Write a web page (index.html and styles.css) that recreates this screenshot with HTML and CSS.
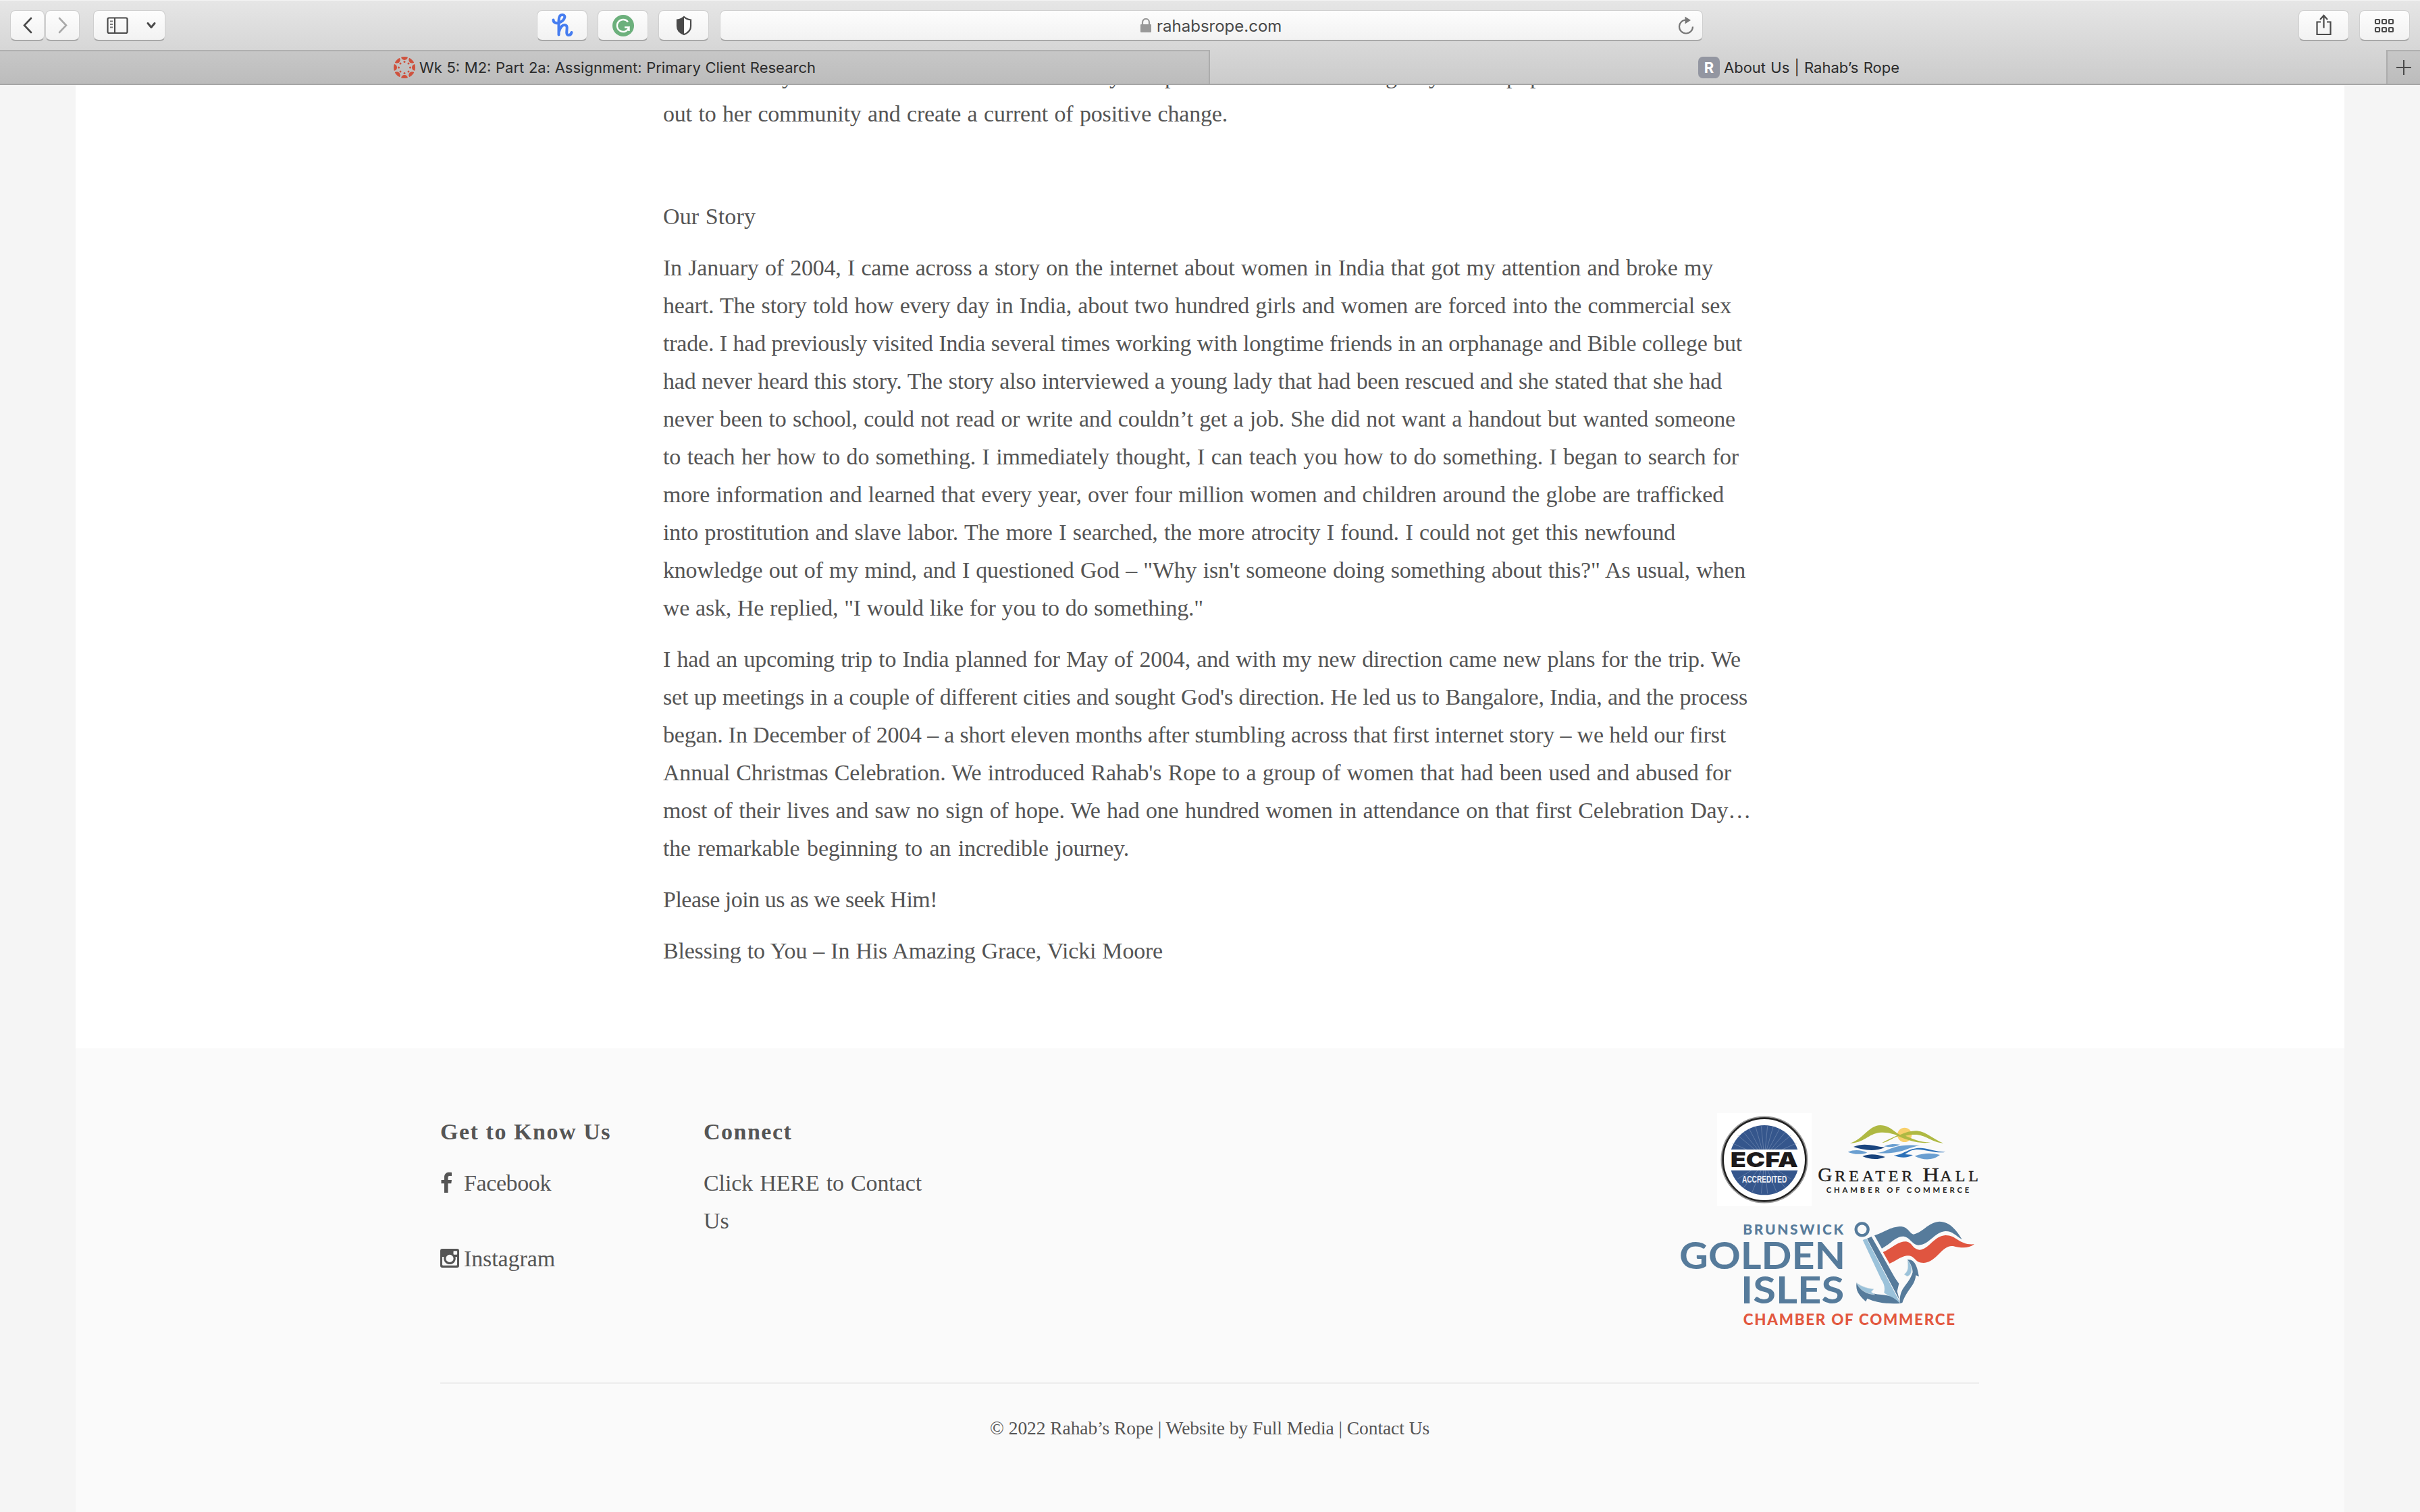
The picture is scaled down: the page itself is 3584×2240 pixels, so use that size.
FILE: index.html
```html
<!DOCTYPE html>
<html lang="en">
<head>
<meta charset="utf-8">
<title>About Us | Rahab’s Rope</title>
<link rel="stylesheet" href="styles.css">
</head>
<body>
<header class="chrome">
  <div class="toolbar">
    <div class="group nav">
      <button class="btn nav-btn"><svg width="50" height="45" viewBox="0 0 50 45"><path d="M30 12 20 22.5 30 33" fill="none" stroke="#4a4a4a" stroke-width="2.6" stroke-linecap="round"/></svg></button>
      <button class="btn nav-btn"><svg width="50" height="45" viewBox="0 0 50 45"><path d="M20 12 30 22.5 20 33" fill="none" stroke="#a9a9a9" stroke-width="2.6" stroke-linecap="round"/></svg></button>
    </div>
    <div class="btn sidebar-btn">
      <svg width="69" height="45" viewBox="0 0 69 45"><rect x="20.5" y="11.5" width="29" height="22.5" rx="2" fill="none" stroke="#4a4a4a" stroke-width="2.2"/><path d="M31 11v23" stroke="#4a4a4a" stroke-width="2"/><path d="M24 16.5h4M24 21h4M24 25.500h4" stroke="#777" stroke-width="2"/></svg>
      <span class="divider"></span>
      <svg width="36" height="45" viewBox="0 0 36 45"><path d="M11 19.500 16 25.500 21 19.500" fill="none" stroke="#4a4a4a" stroke-width="3" stroke-linecap="round" stroke-linejoin="round"/></svg>
    </div>
    <div class="group extensions">
      <button class="btn ext"><svg width="74" height="45" viewBox="0 0 74 45"><path d="M23.500 14.500c0 5 6 6 11 3 6-3 8-10 3-10.500-4.500-.5-6 3.500-6 8.500v21M31.500 33c2-7 5-11 8.500-11 4 0 4 3.500 3.500 7-.5 5-.5 8 2.500 8 2.500 0 4-1.500 4.500-4" fill="none" stroke="#467df0" stroke-width="4" stroke-linecap="round" stroke-linejoin="round"/></svg></button>
      <button class="btn ext"><svg width="74" height="45" viewBox="0 0 74 45"><circle cx="37" cy="23" r="16" fill="#6cb07c"/><path d="M44 17.500A9 9 0 1 0 45.500 25.500H39M45.500 25v6" fill="none" stroke="#fff" stroke-width="2.400"/></svg></button>
      <button class="btn ext"><svg width="74" height="45" viewBox="0 0 74 45"><path d="M37 10c3 3 6 4 10 4.500V24c0 6-5 10-10 12-5-2-10-6-10-12v-9.500C31 14 34 13 37 10z" fill="#fff" stroke="#4a4a4a" stroke-width="2.200"/><path d="M37 10v26c-5-2-10-6-10-12v-9.500C31 14 34 13 37 10z" fill="#4a4a4a"/></svg></button>
    </div>
    <div class="btn address">
      <svg class="lock" width="18" height="21" viewBox="0 0 18 21"><rect x="1" y="9" width="16" height="12" rx="1" fill="#999"/><path d="M4 10V6a5 5 0 0 1 10 0v4" fill="none" stroke="#999" stroke-width="2.200"/></svg>
      <span class="url">rahabsrope.com</span>
      <svg class="reload" width="28" height="32" viewBox="0 0 28 32"><path d="M14 7.500A10 10 0 1 0 24 17.500" fill="none" stroke="#777" stroke-width="2.200"/><path d="M12.500 2.500 21 8l-8.500 5.500z" fill="#777"/></svg>
    </div>
    <div class="group actions">
      <button class="btn act"><svg width="75" height="45" viewBox="0 0 75 45"><path d="M33 17.500h-5.500V36h20V17.500H42M37.500 26.500V9M32 14l5.500-6 5.500 6" fill="none" stroke="#4a4a4a" stroke-width="2.200"/></svg></button>
      <button class="btn act"><svg width="75" height="45" viewBox="0 0 75 45"><g fill="none" stroke="#4a4a4a" stroke-width="2.200"><rect x="24" y="14" width="6" height="6" rx="1"/><rect x="34" y="14" width="6" height="6" rx="1"/><rect x="44" y="14" width="6" height="6" rx="1"/><rect x="24" y="26" width="6" height="6" rx="1"/><rect x="34" y="26" width="6" height="6" rx="1"/><rect x="44" y="26" width="6" height="6" rx="1"/></g></svg></button>
    </div>
  </div>
  <div class="tabs">
    <div class="tab inactive">
      <svg width="32" height="32" viewBox="0 0 32 32"><defs><clipPath id="disc"><circle cx="16" cy="16" r="16"/></clipPath></defs><g fill="#cf513d"><g clip-path="url(#disc)"><circle cx="16" cy="0" r="5"/><circle cx="27.300" cy="4.700" r="5"/><circle cx="32" cy="16" r="5"/><circle cx="27.300" cy="27.300" r="5"/><circle cx="16" cy="32" r="5"/><circle cx="4.700" cy="27.300" r="5"/><circle cx="0" cy="16" r="5"/><circle cx="4.700" cy="4.700" r="5"/></g><circle cx="16" cy="7.500" r="1.500"/><circle cx="22" cy="10" r="1.500"/><circle cx="24.500" cy="16" r="1.500"/><circle cx="22" cy="22" r="1.500"/><circle cx="16" cy="24.500" r="1.500"/><circle cx="10" cy="22" r="1.500"/><circle cx="7.500" cy="16" r="1.500"/><circle cx="10" cy="10" r="1.500"/></g></svg>
      <span class="tab-title title-wk">Wk 5: M2: Part 2a: Assignment: Primary Client Research</span>
    </div>
    <div class="tab active">
      <span class="badge">R</span>
      <span class="tab-title title-about">About Us | Rahab’s Rope</span>
    </div>
    <div class="tab-add"><svg width="24" height="24" viewBox="0 0 24 24"><path d="M12 1v22M1 12h22" stroke="#4a4a4a" stroke-width="2"/></svg></div>
  </div>
</header>
<div class="page">
  <main class="article">
    <div class="copy">
      <p class="cut"><span>y</span><span>y</span><span>p</span><span>g</span><span>y</span><span>p</span><span>p</span></p>
      <p class="intro"><span class="ln">out to her community and create a current of positive change.</span></p>
      <p class="blank">&nbsp;</p>
      <p class="heading"><span class="ln">Our Story</span></p>
      <p class="story">
        <span class="ln">In January of 2004, I came across a story on the internet about women in India that got my attention and broke my</span>
        <span class="ln">heart. The story told how every day in India, about two hundred girls and women are forced into the commercial sex</span>
        <span class="ln">trade. I had previously visited India several times working with longtime friends in an orphanage and Bible college but</span>
        <span class="ln">had never heard this story. The story also interviewed a young lady that had been rescued and she stated that she had</span>
        <span class="ln">never been to school, could not read or write and couldn’t get a job. She did not want a handout but wanted someone</span>
        <span class="ln">to teach her how to do something. I immediately thought, I can teach you how to do something. I began to search for</span>
        <span class="ln">more information and learned that every year, over four million women and children around the globe are trafficked</span>
        <span class="ln">into prostitution and slave labor. The more I searched, the more atrocity I found. I could not get this newfound</span>
        <span class="ln">knowledge out of my mind, and I questioned God – "Why isn't someone doing something about this?" As usual, when</span>
        <span class="ln">we ask, He replied, "I would like for you to do something."</span>
      </p>
      <p class="trip">
        <span class="ln">I had an upcoming trip to India planned for May of 2004, and with my new direction came new plans for the trip. We</span>
        <span class="ln">set up meetings in a couple of different cities and sought God's direction. He led us to Bangalore, India, and the process</span>
        <span class="ln">began. In December of 2004 – a short eleven months after stumbling across that first internet story – we held our first</span>
        <span class="ln">Annual Christmas Celebration. We introduced Rahab's Rope to a group of women that had been used and abused for</span>
        <span class="ln">most of their lives and saw no sign of hope. We had one hundred women in attendance on that first Celebration Day…</span>
        <span class="ln">the remarkable beginning to an incredible journey.</span>
      </p>
      <p class="join"><span class="ln">Please join us as we seek Him!</span></p>
      <p class="sign"><span class="ln">Blessing to You – In His Amazing Grace, Vicki Moore</span></p>
    </div>
  </main>
  <footer class="footer">
    <div class="columns">
      <section class="know">
        <h2><span class="ln">Get to Know Us</span></h2>
        <a class="social"><svg width="28" height="32" viewBox="0 0 28 32"><path d="M17 1v5h-3c-2 0-2.500 1-2.500 2.500V12H17l-.7 5.300h-4.800V31H6V17.300H1.500V12H6V8c0-4.500 2.700-7.200 7-7.200 2 0 3.400.1 4 .2z" fill="#555"/></svg><span class="ln fb">Facebook</span></a>
        <a class="social insta"><svg width="28" height="32" viewBox="0 0 28 32"><path fill="#555" fill-rule="evenodd" d="M3 2h22a3 3 0 0 1 3 3v22a3 3 0 0 1-3 3H3a3 3 0 0 1-3-3V5a3 3 0 0 1 3-3zM20.500 5.200a1 1 0 0 0-1 1v3.600a1 1 0 0 0 1 1h3.600a1 1 0 0 0 1-1V6.200a1 1 0 0 0-1-1zM3 14v11.500a1.200 1.200 0 0 0 1.200 1.200h19.600a1.200 1.200 0 0 0 1.200-1.200V14h-2.500a8.800 8.800 0 1 1-17 0zM14 10.800a5.600 5.600 0 1 0 0 11.200 5.600 5.600 0 0 0 0-11.200z"/></svg><span class="ln ig">Instagram</span></a>
      </section>
      <section class="connect">
        <h2><span class="ln">Connect</span></h2>
        <a><span class="ln click">Click HERE to Contact</span><span class="ln us">Us</span></a>
      </section>
      <section class="logos">
        <svg class="ecfa" width="140" height="138" viewBox="249 57 420 414">
          <rect x="249" y="57" width="420" height="414" fill="#fff"/>
          <circle cx="459" cy="264" r="189" fill="none" stroke="#999" stroke-width="9"/>
          <circle cx="459" cy="264" r="184" fill="#fff" stroke="#222" stroke-width="8"/>
          <circle cx="459" cy="266" r="155" fill="#35568c"/>
          <path d="M459 255 315 190M459 255 340 155M459 255 365 140M459 255 392 128M459 255 420 118M459 255 445 115M459 255 473 115M459 255 498 118M459 255 526 128M459 255 553 140M459 255 578 155M459 255 603 190M459 275 340 350M459 275 365 390M459 275 405 408M459 275 445 415M459 275 473 415M459 275 513 408M459 275 553 390M459 275 578 350" stroke="#91a4c4" stroke-width="2" opacity=".7"/>
          <rect x="298" y="219" width="322" height="93" fill="#fff"/>
          <text x="308" y="298" font-family="Inter, sans-serif" font-weight="900" font-size="91" textLength="301" lengthAdjust="spacingAndGlyphs" fill="#1d1a1c">ECFA</text>
          <text x="360" y="367" font-family="Liberation Sans, sans-serif" font-weight="700" font-size="43" textLength="199" lengthAdjust="spacingAndGlyphs" fill="#eef1f6">ACCREDITED</text>
        </svg>
        <svg class="hall" width="240" height="105" viewBox="699 105 720 315">
          <circle cx="1085" cy="154" r="32" fill="#f8d06b"/>
          <path d="M842 191C900 175 925 112 977 111c40 0 62 30 88 43 25-12 51-19 75-18 45 5 75 40 118 55-55-5-80-38-127-38-20 0-30 2-42 5 35 14 60 29 112 29-50 9-100-8-143-27-30 8-45 26-73 29 25-14 45-22 67-33-35-12-55-15-80-12-45 5-70 47-129 47z" fill="#afb943"/>
          <path d="M858 207c50-20 90-3 139 3-45 20-95 12-139-3zM898 249c35-14 65-8 101 3-35 15-70 10-101-3z" fill="#19447e"/>
          <path d="M833 230c30-12 60-9 86 3-30 10-60 8-86-3zM993 205c20-10 45-12 72-8-20 10-45 13-72 8zM960 234c50-2 70-45 193-32-50 4-80 42-193 32zM1130 248c45-15 75-14 112-5-30 25-75 25-112 5z" fill="#6a9fd1"/>
          <path d="M1037 245c50-5 65-35 121-33 40 3 60 16 109 18-50 10-110-24-154-6-10 5-20 11-26 16l35 3c-25 15-55 14-85 2z" fill="#2d71b8"/>
          <g fill="#231f20" font-family="Liberation Serif, serif" stroke="#231f20" stroke-width="1.200">
            <text x="700" y="361" font-size="88">G</text>
            <text x="775" y="361" font-size="72" textLength="345">REATER</text>
            <text x="1165" y="361" font-size="88" textLength="74" lengthAdjust="spacingAndGlyphs">H</text>
            <text x="1243" y="361" font-size="72" textLength="170">ALL</text>
          </g>
          <text x="737" y="411" font-family="Lato, sans-serif" font-weight="700" font-size="34" textLength="635" fill="#231f20">CHAMBER OF COMMERCE</text>
        </svg>
        <svg class="golden" width="440" height="160" viewBox="80 535 1320 480">
          <g fill="#567b9b" font-family="Lato, sans-serif" font-weight="900">
            <text x="363" y="598" font-size="63" textLength="446">BRUNSWICK</text>
            <text x="80" y="752" font-size="166" font-weight="700" textLength="738" lengthAdjust="spacingAndGlyphs">GOLDEN</text>
            <text x="353" y="904" font-size="166" font-weight="700" textLength="460" lengthAdjust="spacingAndGlyphs">ISLES</text>
          </g>
          <text x="364" y="1000" font-family="Lato, sans-serif" font-weight="900" font-size="67" textLength="940" fill="#e2583f">CHAMBER OF COMMERCE</text>
          <circle cx="892" cy="575" r="27" fill="none" stroke="#567b9b" stroke-width="13"/>
          <path d="M947 602c50-18 75-40 120-40 30 3 35 30 53 35 45-10 60-50 115-57 50 0 80 45 102 80-30-18-45-38-75-37-50 5-70 60-120 62-30-3-35-35-65-39-35-2-60 35-97 54z" fill="#567b9b"/>
          <path d="M985 676c45-20 65-48 103-47 30 5 25 33 60 37 45-5 60-60 115-65 50 0 60 45 128 40-25 20-60 17-95 8-50-5-70 70-130 75-45 0-35-35-75-32-30 5-45 22-77 35z" fill="#e05540"/>
          <path d="M895 622 912 616 1050 880 1062 904 990 857c5-25 0-40-13-60z" fill="#9bc2da"/>
          <path d="M914 616 934 607 1038 790 1056 816 1048 850 1058 888z" fill="#567b9b"/>
          <path d="M868 812C890 858 945 862 985 866c30 2 52 14 76 38-55 3-100-2-146-22l-6 14c-25-25-48-45-41-84z" fill="#567b9b"/>
          <path d="M1060 904c-4-75 40-80 57-139 0-25-15-40-24-56 35-3 45 35 52 75l-14-5c-5 50-38 60-60 122z" fill="#567b9b"/>
          <path d="M868 812c25 20 50 25 76 28l-11 13 15 12c-35-3-65-18-80-53zM1094 711c28 30 20 70-2 72l-13-8c20-15 18-35 15-64z" fill="#9bc2da" stroke="#d3dfe6" stroke-width="2"/>
        </svg>
      </section>
    </div>
    <div class="legal"><span class="ln">© 2022 Rahab’s Rope | Website by Full Media | Contact Us</span></div>
  </footer>
</div>
</body>
</html>
```
FILE: styles.css
```css
* { box-sizing: border-box; }
body { margin: 0; width: 3584px; height: 2240px; overflow: hidden; background: #f5f5f5; color: #555; font-family: "Liberation Serif", serif; }
p, h2 { margin: 0; }
svg { display: block; flex: none; }
button { padding: 0; font: inherit; }

/* browser window */
.chrome { height: 126px; background: linear-gradient(#e6e6e6, #cbcbcb); border-top: 1px solid #f4f4f4; border-bottom: 2px solid #a6a6a6; font-family: Inter, sans-serif; }
.toolbar { height: 73px; padding: 14px 15px 0 15px; display: flex; align-items: flex-start; }
.group { display: flex; }
.btn { height: 46px; display: flex; align-items: center; justify-content: center; border: 1px solid #cfcfcf; border-bottom: 2px solid #a9a9a9; border-radius: 8px; background: linear-gradient(#fdfdfd, #f2f2f2); overflow: hidden; }
.nav { gap: 2px; margin-right: 20px; }
.nav-btn { width: 51px; }
.nav-btn + .nav-btn { margin-left: -1px; }
.sidebar-btn { width: 107px; margin-right: 550px; }
.divider { width: 2px; height: 44px; background: #dcdcdc; }
.extensions { gap: 15px; margin-right: 16px; }
.ext { width: 75px; }
.address { width: 1456px; margin-right: auto; padding: 0 10px 0 0; }
.lock { margin: 0 7px 0 621px; }
.url { width: 184px; padding-top: 3px; font-size: 24px; line-height: 30px; color: #4a4a4a; white-space: nowrap; }
.reload { margin-left: auto; }
.actions { gap: 15px; }
.act { width: 75px; }
.tabs { height: 50px; display: flex; }
.tab { display: flex; align-items: center; gap: 6px; font-size: 22px; color: #2c2c2c; white-space: nowrap; }
.inactive { width: 1792px; padding-left: 583px; background: linear-gradient(#c7c7c7, #bcbcbc); border-top: 2px solid #b0b0b0; border-right: 2px solid #acacac; }
.active { flex: 1; padding-left: 723px; padding-top: 2px; }
.badge { width: 32px; height: 32px; border-radius: 7px; background: #9396a1; color: #fff; font-weight: 700; font-size: 22px; line-height: 32px; text-align: center; }
.title-wk { width: 587px; text-align-last: justify; }
.title-about { width: 260px; text-align-last: justify; }
.tab-add { width: 50px; display: flex; align-items: center; padding-left: 12px; background: linear-gradient(#c7c7c7, #bcbcbc); border-top: 2px solid #b0b0b0; border-left: 2px solid #acacac; }

/* page */
.page { width: 3360px; margin: 0 auto; height: 2114px; background: #fff; }
.article { height: 1427px; overflow: hidden; }
.copy { margin: -41px 0 0 870px; font-size: 34px; line-height: 56px; letter-spacing: -.2px; }
.copy p + p { margin-top: 20px; }
.copy .cut + p { margin-top: 0; }
.cut { display: flex; height: 56px; }
.cut span { width: 18px; }
.cut span:nth-child(1) { margin-left: 176px; }
.cut span:nth-child(2) { margin-left: 467px; }
.cut span:nth-child(3) { margin-left: 64px; }
.cut span:nth-child(4) { margin-left: 309px; }
.cut span:nth-child(5) { margin-left: 46px; }
.cut span:nth-child(6) { margin-left: 97px; }
.cut span:nth-child(7) { margin-left: 17px; }
.ln { display: block; white-space: nowrap; text-align-last: justify; }
.intro .ln { width: 836px; }
.heading .ln { width: 137px; letter-spacing: .1px; }
.story .ln:nth-child(1) { width: 1555px; }
.story .ln:nth-child(2) { width: 1582px; }
.story .ln:nth-child(3) { width: 1598px; }
.story .ln:nth-child(4) { width: 1568px; }
.story .ln:nth-child(5) { width: 1588px; }
.story .ln:nth-child(6) { width: 1593px; }
.story .ln:nth-child(7) { width: 1571px; }
.story .ln:nth-child(8) { width: 1499px; }
.story .ln:nth-child(9) { width: 1603px; }
.story .ln:nth-child(10) { width: 800px; }
.trip .ln:nth-child(1) { width: 1596px; }
.trip .ln:nth-child(2) { width: 1606px; }
.trip .ln:nth-child(3) { width: 1574px; }
.trip .ln:nth-child(4) { width: 1582px; }
.trip .ln:nth-child(5) { width: 1611px; }
.trip .ln:nth-child(6) { width: 690px; }
.join .ln { width: 406px; letter-spacing: -.5px; }
.sign .ln { width: 740px; }

/* footer */
.footer { height: 687px; padding: 96px 541px 0 540px; background: #fafafa; font-size: 34px; line-height: 56px; }
.columns { height: 401px; display: flex; border-bottom: 2px solid #ededed; }
.know { width: 390px; }
.connect { width: 330px; }
.columns h2 { margin: 0 0 20px; font-size: 34px; line-height: 56px; }
.know h2 .ln { width: 253px; letter-spacing: 1.5px; }
.connect h2 .ln { width: 131px; letter-spacing: 1.5px; }
.social { display: flex; gap: 7px; align-items: center; height: 56px; }
.social svg { margin-top: -2px; }
.insta { margin-top: 56px; }
.fb { width: 130px; letter-spacing: -.4px; }
.ig { width: 135px; letter-spacing: -.1px; }
.click { width: 323px; letter-spacing: -.1px; }
.us { width: 36px; }
.logos { width: 444px; margin-left: auto; display: grid; grid-template-columns: 196px 248px; grid-template-rows: 138px 160px; row-gap: 21px; }
.ecfa { justify-self: end; }
.hall { margin: 16px 0 0 9px; }
.golden { grid-column: 1 / 3; }
.legal { padding-top: 38px; line-height: 56px; font-size: 27.5px; letter-spacing: -.1px; display: flex; justify-content: center; }
.legal .ln { width: 651px; }
```
